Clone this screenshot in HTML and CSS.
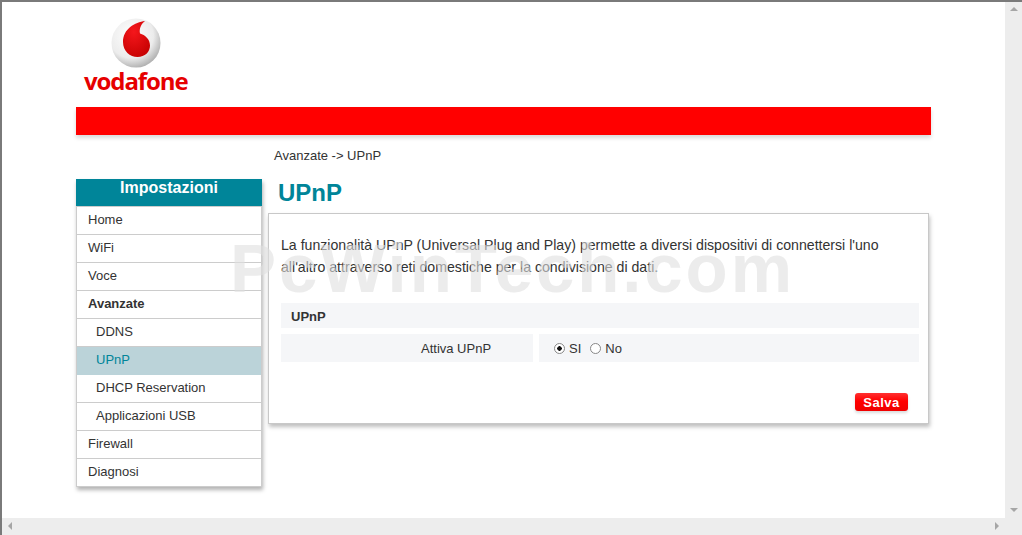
FILE: index.html
```html
<!DOCTYPE html>
<html lang="it">
<head>
    <meta charset="UTF-8">
    <title>Vodafone - UPnP</title>
    <link rel="stylesheet" href="styles.css">
</head>
<body>
    <div class="window">
        <div class="window-row">
            <div class="viewport">
                <div class="page">
                    <!-- Logo -->
                    <div class="logo">
                        <svg class="logo-mark" width="50" height="50" viewBox="0 0 50 50">
                            <defs>
                                <radialGradient id="ball" cx="40%" cy="35%" r="70%">
                                    <stop offset="0%" stop-color="#ffffff"/>
                                    <stop offset="65%" stop-color="#ececec"/>
                                    <stop offset="100%" stop-color="#a9a9a9"/>
                                </radialGradient>
                                <radialGradient id="drop" cx="40%" cy="30%" r="80%">
                                    <stop offset="0%" stop-color="#f5171c"/>
                                    <stop offset="100%" stop-color="#c40000"/>
                                </radialGradient>
                            </defs>
                            <circle cx="25" cy="25" r="24.5" fill="url(#ball)"/>
                            <path d="M34 3 C24 4 12 11 12 24 C12 33 19 39 26.5 39 C34 39 39 34 39 27.5 C39 21 34 17 29 15.5 C28 11 30 6 34 3 Z" fill="url(#drop)"/>
                        </svg>
                        <div class="logo-text">vodafone</div>
                    </div>

                    <div class="red-bar"></div>

                    <div class="breadcrumb">Avanzate -&gt; UPnP</div>

                    <div class="columns">
                        <!-- Menu -->
                        <div class="sidebar">
                            <div class="sidebar-title">Impostazioni</div>
                            <ul class="menu">
                                <li>Home</li>
                                <li>WiFi</li>
                                <li>Voce</li>
                                <li class="open">Avanzate</li>
                                <li class="sub">DDNS</li>
                                <li class="sub active">UPnP</li>
                                <li class="sub">DHCP Reservation</li>
                                <li class="sub">Applicazioni USB</li>
                                <li>Firewall</li>
                                <li>Diagnosi</li>
                            </ul>
                        </div>

                        <!-- Contenuto -->
                        <div class="content">
                            <h1>UPnP</h1>
                            <div class="panel">
                                <p class="intro">La funzionalità UPnP (Universal Plug and Play) permette a diversi dispositivi di connettersi l'uno all'altro attraverso reti domestiche per la condivisione di dati.</p>
                                <div class="section-row">UPnP</div>
                                <div class="field-row">
                                    <div class="field-label">Attiva UPnP</div>
                                    <div class="field-value">
                                        <span class="radio checked"></span><span class="radio-text">SI</span>
                                        <span class="radio"></span><span class="radio-text">No</span>
                                    </div>
                                </div>
                                <div class="actions">
                                    <span class="btn-save">Salva</span>
                                </div>
                            </div>
                        </div>
                    </div>
                </div>
                <div class="watermark">PcWinTech.com</div>
            </div>
            <div class="scroll-v">
                <span class="arrow-up"></span>
                <span class="arrow-down"></span>
            </div>
        </div>
        <div class="scroll-h">
            <span class="arrow-left"></span>
            <span class="arrow-right"></span>
        </div>
    </div>
</body>
</html>
```

FILE: styles.css
```css
* {
    box-sizing: border-box;
}

html, body {
    margin: 0;
    height: 100%;
    overflow: hidden;
}

body {
    font-family: "Liberation Sans", Arial, sans-serif;
    font-size: 14px;
    color: #333;
    background: #fff;
}

.window {
    display: flex;
    flex-direction: column;
    height: 535px;
    border-top: 2px solid #7a7a7a;
    border-left: 2px solid #7a7a7a;
}

.window-row {
    display: flex;
    flex: 1;
    min-height: 0;
}

.viewport {
    position: relative;
    flex: 1;
    overflow: hidden;
}

.page {
    width: 855px;
    margin-left: 74px;
}

.logo {
    height: 105px;
    padding: 16px 0 0 8px;
}

.logo-mark {
    display: block;
    margin-left: 27px;
}

.logo-text {
    font-family: "Open Sans", "Liberation Sans", sans-serif;
    font-size: 24px;
    font-weight: 700;
    line-height: 26px;
    letter-spacing: -1.1px;
    color: #e60000;
}

.red-bar {
    height: 28px;
    background: #ff0000;
    box-shadow: 0 3px 4px rgba(0, 0, 0, 0.15);
}

.breadcrumb {
    height: 44px;
    padding: 13px 0 0 198px;
    font-size: 13px;
    line-height: 16px;
}

.columns {
    display: flex;
    align-items: flex-start;
}

.sidebar {
    width: 186px;
    margin-right: 6px;
    box-shadow: 1px 3px 4px rgba(0, 0, 0, 0.3);
}

.sidebar-title {
    height: 27px;
    background: #008599;
    color: #fff;
    font-size: 16px;
    font-weight: 700;
    line-height: 18px;
    text-align: center;
}

.menu {
    list-style: none;
    margin: 0;
    padding: 0;
    border-top: 1px solid #ccc;
    border-left: 1px solid #ccc;
    border-right: 1px solid #ccc;
}

.menu li {
    height: 28px;
    padding-left: 11px;
    border-bottom: 1px solid #ccc;
    font-size: 13px;
    line-height: 25px;
}

.menu li.open {
    font-weight: 700;
}

.menu li.sub {
    padding-left: 19px;
}

.menu li.active {
    background: #bbd3d9;
    color: #008599;
    border-bottom-color: #bbd3d9;
}

.content {
    width: 661px;
}

h1 {
    height: 34px;
    margin: 0;
    padding-left: 10px;
    font-size: 24px;
    line-height: 28px;
    font-weight: 700;
    color: #008599;
}

.panel {
    height: 211px;
    padding: 20px 9px 0 12px;
    border: 1px solid #c8c8c8;
    box-shadow: 1px 3px 4px rgba(0, 0, 0, 0.25);
}

.intro {
    margin: 0 0 25px;
    font-size: 14.14px;
    line-height: 22px;
}

.section-row {
    height: 25px;
    padding-left: 10px;
    background: #f5f6f8;
    font-size: 13px;
    font-weight: 700;
    line-height: 27px;
}

.field-row {
    display: flex;
    gap: 6px;
    height: 28px;
    margin-top: 6px;
    font-size: 13px;
    line-height: 30px;
}

.field-label {
    width: 252px;
    padding-left: 140px;
    background: #f5f6f8;
}

.field-value {
    display: flex;
    align-items: center;
    flex: 1;
    padding-left: 15px;
    background: #f5f6f8;
}

.radio {
    width: 11px;
    height: 11px;
    border: 1px solid #888;
    border-radius: 50%;
    background: #fff;
    margin-right: 4px;
}

.radio.checked {
    background: radial-gradient(circle, #111 0 2px, #fff 2.5px);
}

.radio-text {
    margin-top: 2px;
    margin-right: 9px;
}

.actions {
    display: flex;
    justify-content: flex-end;
    margin-top: 31px;
    padding-right: 11px;
}

.btn-save {
    width: 53px;
    height: 18px;
    border-radius: 3px;
    background: linear-gradient(#ff3030 0%, #ff0000 45%, #f00000 100%);
    box-shadow: 0 2px 3px rgba(0, 0, 0, 0.15);
    color: #fff;
    font-size: 13px;
    font-weight: 700;
    line-height: 19px;
    letter-spacing: 0.5px;
    text-align: center;
}

/* sits over the page, the text under it shows through */
.watermark {
    position: absolute;
    top: 231px;
    left: 228px;
    font-size: 69px;
    font-weight: 700;
    line-height: 72px;
    letter-spacing: 2.9px;
    color: rgba(223, 223, 223, 0.6);
    white-space: nowrap;
}

.scroll-v {
    position: relative;
    width: 17px;
    background: #ededed;
}

.scroll-h {
    position: relative;
    height: 17px;
    background: #ededed;
}

.arrow-up, .arrow-down, .arrow-left, .arrow-right {
    position: absolute;
    width: 0;
    height: 0;
    border-style: solid;
    border-color: transparent;
}

.arrow-up {
    top: 5px;
    left: 5px;
    border-width: 0 4px 4px;
    border-bottom-color: #a6a6a6;
}

.arrow-down {
    bottom: 6px;
    left: 5px;
    border-width: 4px 4px 0;
    border-top-color: #a6a6a6;
}

.arrow-left {
    top: 4px;
    left: 6px;
    border-width: 4px 4px 4px 0;
    border-right-color: #a6a6a6;
}

.arrow-right {
    top: 4px;
    right: 23px;
    border-width: 4px 0 4px 4px;
    border-left-color: #a6a6a6;
}
```
